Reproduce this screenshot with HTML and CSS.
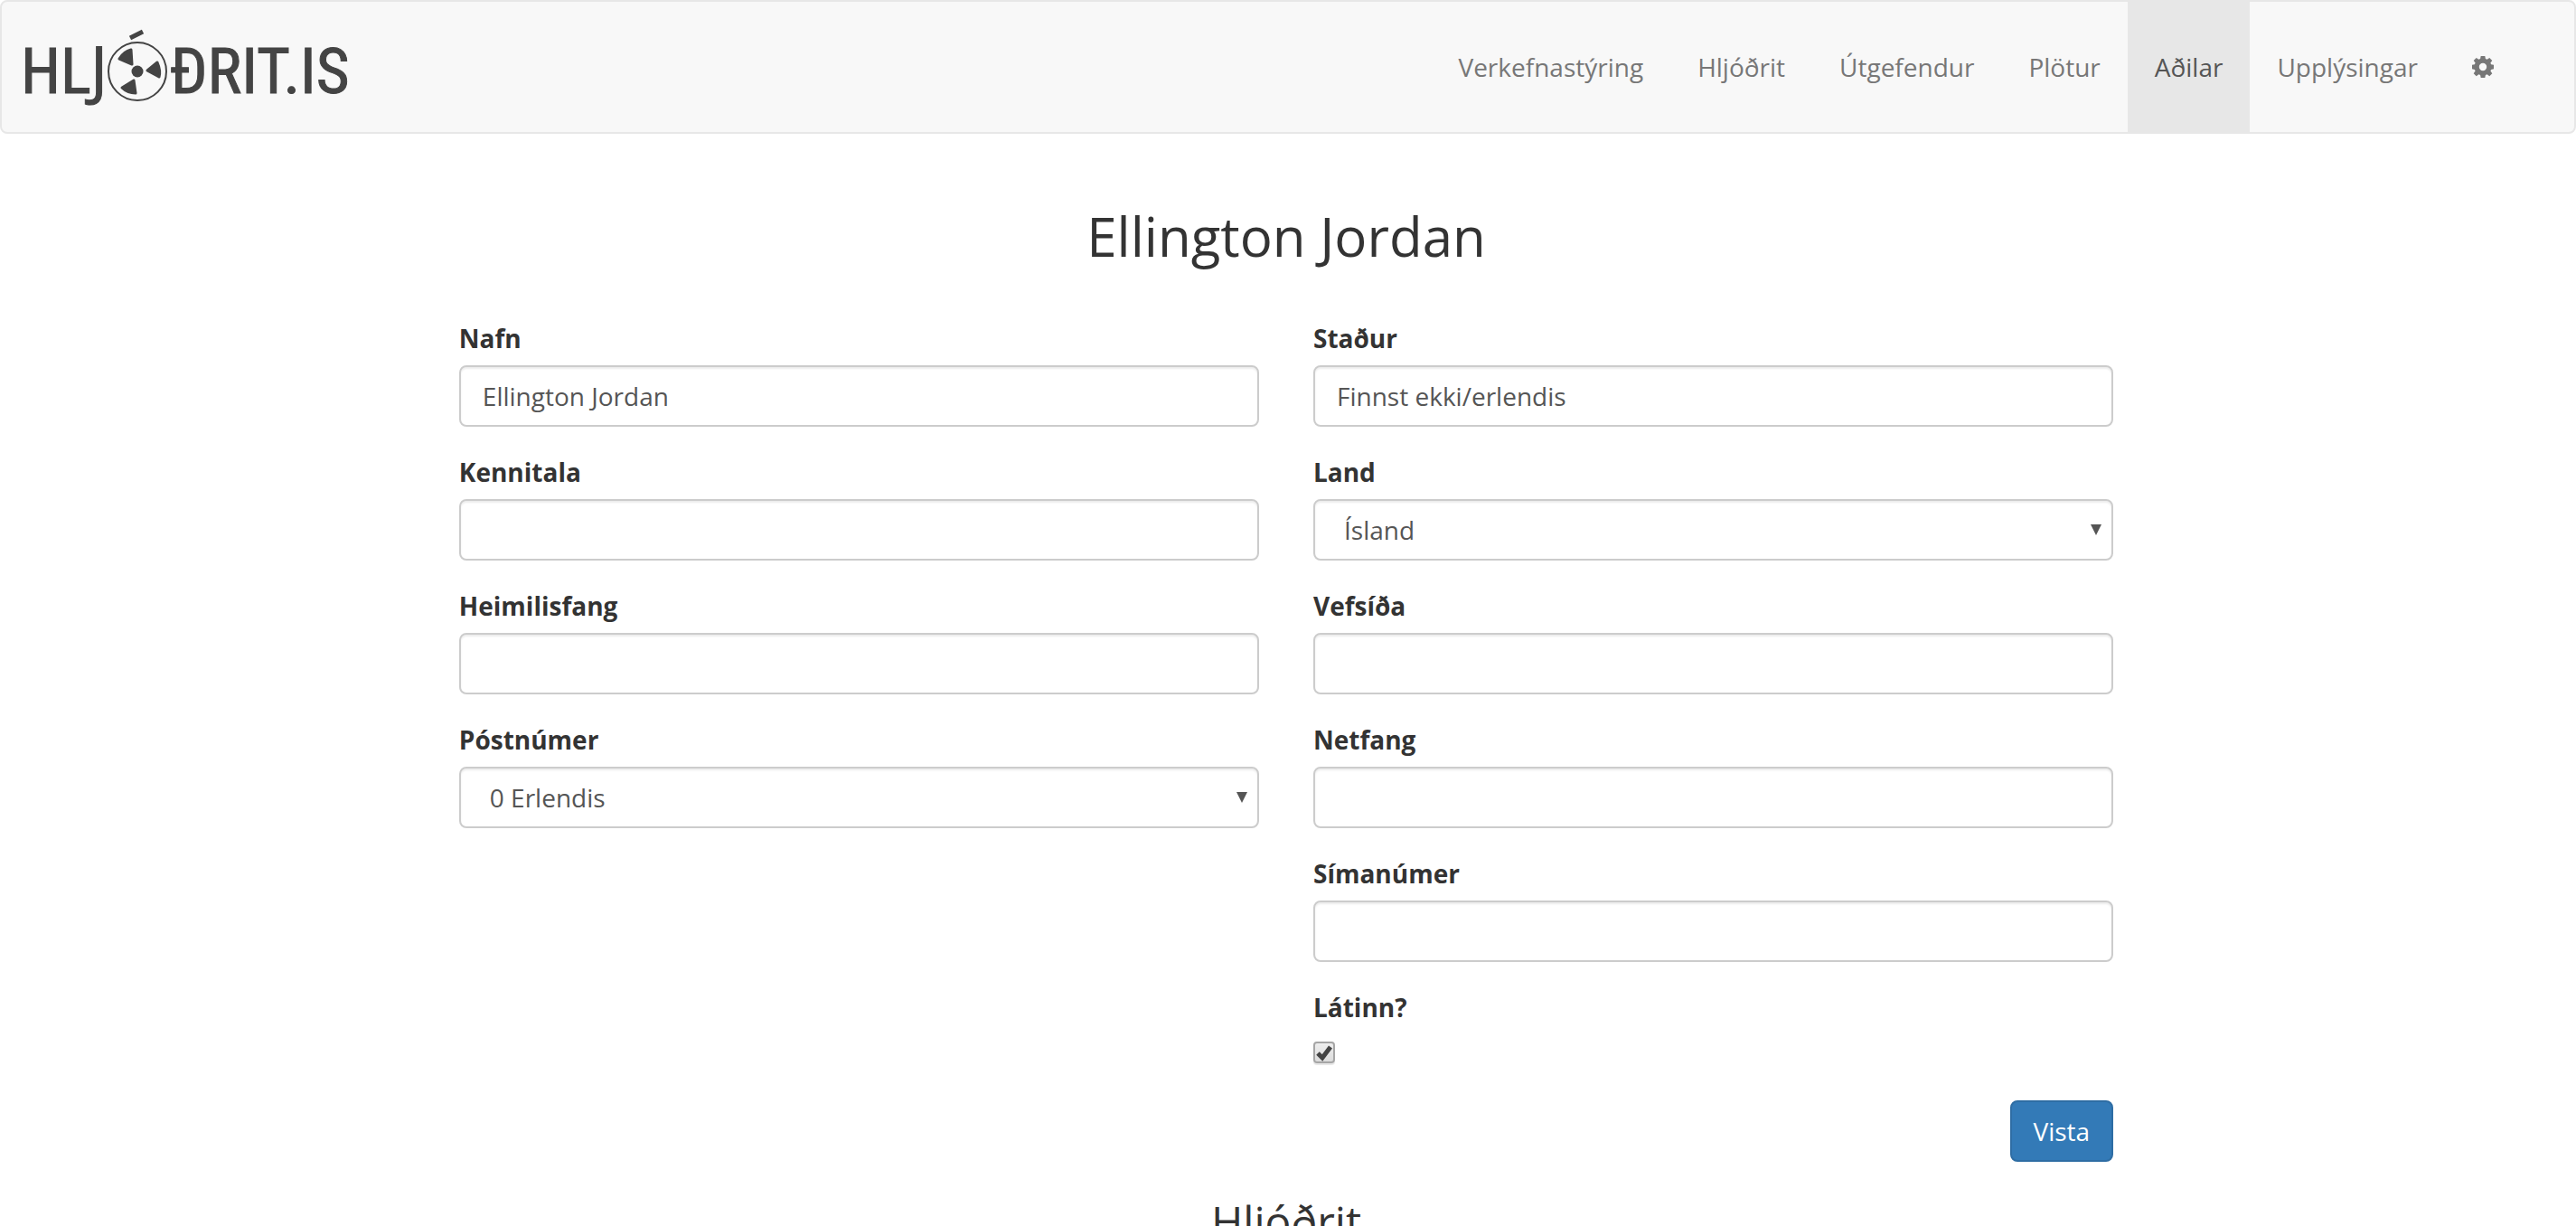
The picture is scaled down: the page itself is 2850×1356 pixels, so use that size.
FILE: index.html
```html
<!DOCTYPE html>
<html lang="is">
<head>
<meta charset="utf-8">
<title>Ellington Jordan - Hljóðrit.is</title>
<link rel="stylesheet" href="styles.css">
</head>
<body>
<header class="navbar">
  <a class="brand" href="#">
    <svg class="logo" viewBox="0 0 360 90" role="img" aria-label="Hljóðrit.is">
      <g class="logo-text">
        <text x="-4" y="73">HL</text>
        <text class="logo-j" x="73" y="73">J</text>
        <text x="161" y="73">ÐRIT.IS</text>
      </g>
      <circle cx="125" cy="49" r="32" fill="none" stroke="#444" stroke-width="2"/>
      <circle cx="125" cy="49" r="6.500"/>
      <path d="M117 12l14-7" stroke="#444" stroke-width="5"/>
      <g stroke="#444" stroke-width="3" stroke-linejoin="round">
        <path d="M136 48l11-9q4 9 2 16z"/>
        <path d="M119 41l-14-6q5-8 13-10z"/>
        <path d="M121 59l-13 8q6 6 15 6z"/>
      </g>
    </svg>
  </a>
  <nav class="menu">
    <a href="#">Verkefnastýring</a>
    <a href="#">Hljóðrit</a>
    <a href="#">Útgefendur</a>
    <a href="#">Plötur</a>
    <a class="active" href="#" aria-current="page">Aðilar</a>
    <a href="#">Upplýsingar</a>
    <a class="settings" href="#" aria-label="Stillingar">
      <svg class="cog" viewBox="0 0 24 24" aria-hidden="true">
        <path fill-rule="evenodd" d="M9.700 0h4.600l.6 3.100 1.700.7L19.300 2l3 3-1.900 2.600.7 1.700L24 9.800v4.500l-2.900.6-.7 1.700 1.900 2.600-3 3-2.700-1.900-1.700.7-.6 3H9.700l-.6-3-1.700-.7L4.700 22.200l-3-3 1.900-2.600-.7-1.700L0 14.300V9.800l2.900-.5.7-1.700L1.700 5l3-3 2.700 1.800 1.700-.7zM12 7.800a4.200 4.200 0 1 0 0 8.400a4.200 4.200 0 1 0 0-8.400z"/>
      </svg>
    </a>
  </nav>
</header>

<main class="page">
  <div class="content">
    <h1>Ellington Jordan</h1>
    <form class="form">
      <div class="column">
        <div class="field">
          <label for="name">Nafn</label>
          <input class="control" id="name" type="text" value="Ellington Jordan">
        </div>
        <div class="field">
          <label for="ssn">Kennitala</label>
          <input class="control" id="ssn" type="text">
        </div>
        <div class="field">
          <label for="address">Heimilisfang</label>
          <input class="control" id="address" type="text">
        </div>
        <div class="field">
          <label for="zip">Póstnúmer</label>
          <select class="control" id="zip"><option>0 Erlendis</option></select>
        </div>
      </div>
      <div class="column">
        <div class="field">
          <label for="city">Staður</label>
          <input class="control" id="city" type="text" value="Finnst ekki/erlendis">
        </div>
        <div class="field">
          <label for="country">Land</label>
          <select class="control" id="country"><option>Ísland</option></select>
        </div>
        <div class="field">
          <label for="website">Vefsíða</label>
          <input class="control" id="website" type="text">
        </div>
        <div class="field">
          <label for="email">Netfang</label>
          <input class="control" id="email" type="email">
        </div>
        <div class="field">
          <label for="phone">Símanúmer</label>
          <input class="control" id="phone" type="tel">
        </div>
        <div class="field">
          <label for="deceased">Látinn?</label>
          <input class="checkbox" id="deceased" type="checkbox" checked>
        </div>
        <button class="save" type="submit">Vista</button>
      </div>
    </form>
    <h3>Hljóðrit</h3>
  </div>
</main>
</body>
</html>
```

FILE: styles.css
```css
* {
  box-sizing: border-box;
}

body {
  margin: 0;
  background: #fff;
  color: #333;
  font-family: "Open Sans", "Noto Sans", sans-serif;
  font-size: 28px;
  line-height: 40px;
}

.navbar {
  display: flex;
  justify-content: space-between;
  align-items: center;
  padding: 0 55px 0 25px;
  background: #f8f8f8;
  border: 2px solid #e7e7e7;
  border-radius: 8px;
}

.brand {
  display: flex;
}

.logo {
  width: 360px;
  height: 90px;
  margin-top: 2px;
  overflow: visible;
  fill: #444;
}

.logo-text {
  font-family: "Roboto Condensed", Roboto, sans-serif;
  font-size: 71px;
  stroke: #444;
  stroke-width: 1px;
}

.logo-j {
  font-family: "Open Sans", sans-serif;
}

.menu {
  display: flex;
}

.menu a {
  padding: 52px 30px;
  color: #777;
  text-decoration: none;
}

.menu .active {
  background: #e7e7e7;
  color: #555;
}

.menu .settings {
  display: flex;
  align-items: center;
}

.cog {
  width: 24px;
  height: 24px;
  margin-right: 4px;
  fill: #777;
}

.page {
  display: flex;
  justify-content: center;
  padding: 80px 4px 20px 0;
}

.content {
  width: calc(66.6667% - 67px);
}

h1,
h3 {
  margin: 0;
  font-weight: 400;
  text-align: center;
}

h1 {
  margin-bottom: 60px;
  font-size: 60px;
  line-height: 66px;
}

h3 {
  margin-top: 40px;
  font-size: 48px;
  line-height: 52px;
}

.form {
  display: grid;
  grid-template-columns: 1fr 1fr;
  gap: 60px;
}

.column {
  display: flex;
  flex-direction: column;
  gap: 30px;
}

.field {
  display: flex;
  flex-direction: column;
  gap: 10px;
}

.field label {
  font-weight: 700;
}

.control {
  width: 100%;
  height: 68px;
  padding: 12px 24px;
  border: 2px solid #ccc;
  border-radius: 8px;
  background: #fff;
  box-shadow: inset 0 2px 2px rgba(0, 0, 0, 0.075);
  color: #555;
  font: inherit;
}

select.control {
  appearance: none;
  padding-left: 32px;
  background: #fff url("data:image/svg+xml,%3Csvg xmlns='http://www.w3.org/2000/svg' width='12' height='12'%3E%3Cpath fill='%23555' d='M0 0h12L6 12z'/%3E%3C/svg%3E") no-repeat right 11px center;
}

.checkbox {
  appearance: none;
  width: 24px;
  height: 24px;
  margin: 8px 0;
  border: 2px solid #a6a6a6;
  border-radius: 4px;
  background: linear-gradient(#eee, #dcdcdc);
  box-shadow: 0 2px 1px rgba(0, 0, 0, 0.1);
}

.checkbox:checked {
  background: url("data:image/svg+xml,%3Csvg xmlns='http://www.w3.org/2000/svg' width='20' height='20'%3E%3Cpath fill='none' stroke='%23444' stroke-width='5' d='M3 11l5 5L17 4'/%3E%3C/svg%3E") no-repeat center, linear-gradient(#eee, #dcdcdc);
}

.save {
  align-self: flex-end;
  margin-top: 3px;
  padding: 12px 24px;
  border: 2px solid #2e6da4;
  border-radius: 8px;
  background: #337ab7;
  color: #fff;
  font: inherit;
}
```
